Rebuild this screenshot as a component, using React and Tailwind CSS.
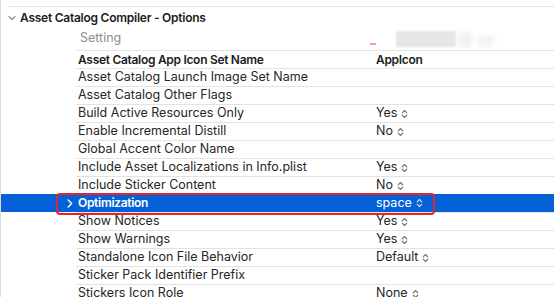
import React from 'react';

const rows = [
  { name: 'Asset Catalog App Icon Set Name', value: 'AppIcon', bold: true },
  { name: 'Asset Catalog Launch Image Set Name', value: '' },
  { name: 'Asset Catalog Other Flags', value: '' },
  { name: 'Build Active Resources Only', value: 'Yes', popup: true },
  { name: 'Enable Incremental Distill', value: 'No', popup: true },
  { name: 'Global Accent Color Name', value: '' },
  { name: 'Include Asset Localizations in Info.plist', value: 'Yes', popup: true },
  { name: 'Include Sticker Content', value: 'No', popup: true },
  { name: 'Optimization', value: 'space', popup: true, selected: true },
  { name: 'Show Notices', value: 'Yes', popup: true },
  { name: 'Show Warnings', value: 'Yes', popup: true },
  { name: 'Standalone Icon File Behavior', value: 'Default', popup: true },
  { name: 'Sticker Pack Identifier Prefix', value: '' },
  { name: 'Stickers Icon Role', value: 'None', popup: true },
];

const UpDown = ({ className }) => (
  <svg width="7" height="10" viewBox="0 0 7 10" className={className} fill="none" stroke="currentColor" strokeWidth="1.1" strokeLinecap="round" strokeLinejoin="round">
    <path d="M1.2 3.8 L3.5 1.5 L5.8 3.8" />
    <path d="M1.2 6.2 L3.5 8.5 L5.8 6.2" />
  </svg>
);

const SettingRow = ({ row }) => {
  if (row.selected) {
    return (
      <div className="relative flex h-[18px] items-center bg-[#0561d8] text-white">
        <div className="flex w-[75px] shrink-0 justify-end pr-[3px]">
          <svg width="6" height="9" viewBox="0 0 6 9" fill="none" stroke="white" strokeWidth="1.4" strokeLinecap="round" strokeLinejoin="round">
            <path d="M1.2 1 L4.6 4.5 L1.2 8" />
          </svg>
        </div>
        <div className="w-[300px] shrink-0 pl-[2px] text-[12px] font-semibold tracking-[-0.3px]">{row.name}</div>
        <div className="flex items-center gap-[4px]">
          <span>{row.value}</span>
          <UpDown className="text-white/80" />
        </div>
        <div className="pointer-events-none absolute left-[55px] top-[-1px] h-[22px] w-[379px] rounded-[4px] border-2 border-[#e5232c]" />
      </div>
    );
  }
  const bold = 'text-[12px] font-semibold tracking-[-0.3px] text-[#1c1c1c]';
  return (
    <div className="flex h-[18px]">
      <div className="w-[75px] shrink-0" />
      <div className="flex flex-1 items-center border-t border-[#e3e3e3]">
        <div className={`w-[300px] shrink-0 pl-[2px] ${row.bold ? bold : 'text-[#262626]'}`}>{row.name}</div>
        {row.value && (
          <div className="flex items-center gap-[4px]">
            <span className={row.bold ? bold : 'text-[#262626]'}>{row.value}</span>
            {row.popup && <UpDown className="text-[#707070]" />}
          </div>
        )}
      </div>
    </div>
  );
};

export default function App() {
  return (
    <div className="h-[297px] w-[554px] overflow-hidden border-l border-[#dcdcdc] bg-white text-[12.5px] leading-none font-['Inter',sans-serif]">
      <div className="mt-[6px] ml-[7px] border-t border-[#e3e3e3]" />

      {/* section title */}
      <div className="flex h-[22px] items-center text-[#1c1c1c]">
        <div className="flex w-[19px] justify-center pl-[2px]">
          <svg width="8" height="6" viewBox="0 0 8 6" fill="none" stroke="#8a8a8a" strokeWidth="1.1" strokeLinecap="round" strokeLinejoin="round">
            <path d="M1 1.5 L4 4.5 L7 1.5" />
          </svg>
        </div>
        <span className="text-[12px] font-semibold tracking-[-0.25px]">Asset Catalog Compiler - Options</span>
      </div>

      {/* column header */}
      <div className="flex h-[21px] items-center">
        <div className="w-[79px] shrink-0" />
        <div className="w-[290px] shrink-0 pb-[2px] text-[#8c8c8c]">Setting</div>
        <div className="flex h-[18px] items-end gap-[2px] pb-[2px]">
          <div className="mb-[2px] h-[2px] w-[6px] bg-[#f2a58a]" />
          <div className="ml-[18px] h-[16px] w-[60px] bg-[#e6e6e6] blur-[1px]" />
          <div className="h-[14px] w-[14px] bg-[#f1f1f1] blur-[2px]" />
          <div className="ml-[4px] h-[12px] w-[16px] bg-[#f3f3f3] blur-[2px]" />
        </div>
      </div>

      {rows.map((row) => (
        <SettingRow key={row.name} row={row} />
      ))}
    </div>
  );
}
